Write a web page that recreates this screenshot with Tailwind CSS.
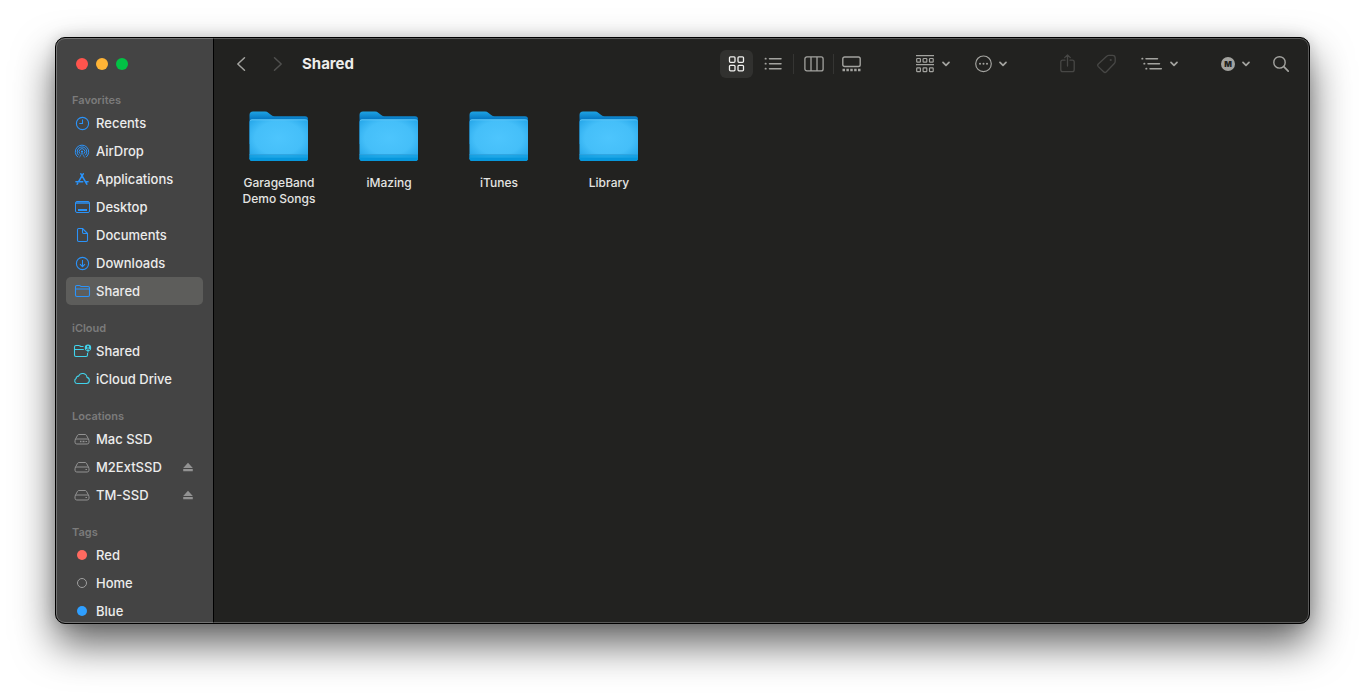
<!DOCTYPE html>
<html lang="en">
<head>
  <meta charset="UTF-8" />
  <meta name="viewport" content="width=device-width, initial-scale=1.0" />
  <title>Shared</title>
  <script src="https://cdn.jsdelivr.net/npm/@tailwindcss/browser@4"></script>
</head>
<body class="bg-white h-screen px-[55px] pt-[37px] pb-[73px] font-['Inter','Liberation_Sans',sans-serif] antialiased overflow-hidden">

  <!-- Shared icons -->
  <svg class="absolute w-0 h-0" aria-hidden="true">
    <defs>
      <linearGradient id="folder-back" x1="0" y1="0" x2="0" y2="1">
        <stop offset="0" stop-color="#1fa3e3" />
        <stop offset=".25" stop-color="#0476c2" />
        <stop offset="1" stop-color="#0476c2" />
      </linearGradient>
      <radialGradient id="folder-front" cx=".5" cy=".45" r=".68">
        <stop offset="0" stop-color="#4dc5fd" />
        <stop offset=".6" stop-color="#45bff9" />
        <stop offset="1" stop-color="#22a4e8" />
      </radialGradient>
    </defs>
    <symbol id="chevron" viewBox="0 0 8 6">
      <path d="M1 1.3 4 4.3 7 1.3" fill="none" stroke="currentColor" stroke-width="1.7" stroke-linecap="round" stroke-linejoin="round" />
    </symbol>
    <symbol id="drive" viewBox="0 0 18 18">
      <path d="M2.2 9.7 4.6 5.2Q5 4.5 5.8 4.5h6.4q.8 0 1.2.7l2.4 4.5" fill="none" stroke="currentColor" />
      <rect x="2" y="9" width="14" height="5" rx="1.8" fill="none" stroke="currentColor" />
      <path d="M12.5 11.5h1.5" stroke="currentColor" />
    </symbol>
    <symbol id="eject" viewBox="0 0 10 10">
      <path d="M5 .8 9.8 6H.2zM.2 7h9.6v2.2H.2z" fill="currentColor" />
    </symbol>
    <symbol id="folder" viewBox="0 0 64 64">
      <path d="M2.5 11q0-3.5 3.5-3.5h12q2 0 3.6 1.4l2.6 2.2q1.5 1.2 3.4 1.2H58q3 0 3 3V40H2.5z" fill="url(#folder-back)" />
      <path d="M2.5 18q0-2.5 2.5-2.5h53.5q2.5 0 2.5 2.5v36q0 3-3 3H5.5q-3 0-3-3z" fill="url(#folder-front)" />
      <path d="M3 16.8q.6-1 2-1h53.5q1.4 0 2 1" fill="none" stroke="#6fd0fb" stroke-width=".8" />
      <path d="M2.5 51H61v3q0 3-3 3H5.5q-3 0-3-3z" fill="#0c9bdd" fill-opacity=".65" />
      <path d="M2.5 50.5H61" stroke="#2b9fdc" stroke-width=".8" />
      <path d="M2.5 53.8H61v.4q0 2.800-3 2.800H5.5q-3 0-3-2.800z" fill="#0797dc" />
    </symbol>
  </svg>

  <!-- Window -->
  <div class="relative flex h-full rounded-[10px] border border-black bg-[#222220] shadow-[0_20px_40px_rgba(0,0,0,0.62),0_0_14px_rgba(0,0,0,0.15)] overflow-hidden">

    <!-- Sidebar -->
    <aside class="w-[158px] shrink-0 bg-[#444444] border-r border-black overflow-hidden">
      <div class="flex items-center gap-2 h-[52px] mb-px pl-5">
        <button aria-label="Close" class="w-3 h-3 rounded-full bg-[#ff544d]"></button>
        <button aria-label="Minimize" class="w-3 h-3 rounded-full bg-[#ffb436]"></button>
        <button aria-label="Zoom" class="w-3 h-3 rounded-full bg-[#02c245]"></button>
      </div>

      <nav class="flex flex-col gap-3.5 px-[10px] text-[13px] font-medium text-[#ececec] whitespace-nowrap">
        <section>
          <h2 class="h-[18px] leading-[18px] pl-1.5 text-[11px] font-semibold text-[#7b7b7b]">Favorites</h2>
          <ul class="text-[#2b93f9]">
            <li><a href="#" class="flex items-center gap-[5px] h-7 pl-[7px] rounded-[5px]">
              <svg class="w-[18px] h-[18px]" viewBox="0 0 18 18" fill="none" stroke="currentColor" stroke-width="1.1"><circle cx="9.5" cy="9.5" r="6.1" /><path d="M9.5 5.5v4H6.3" /></svg>
              <span class="pt-0.5 text-[#ececec]">Recents</span></a></li>
            <li><a href="#" class="flex items-center gap-[5px] h-7 pl-[7px] rounded-[5px]">
              <svg class="w-[18px] h-[18px]" viewBox="0 0 18 18" fill="none" stroke="currentColor" stroke-width="1"><path d="M5 15.2a6.7 6.7 0 1 1 8 0M5.8 13.3a4.8 4.8 0 1 1 6.4 0M7 11.7a2.9 2.9 0 1 1 4 0" /><circle cx="9" cy="9.7" r="1.1" fill="currentColor" stroke="none" /><path d="m9 11-2.6 4.5M9 11l2.6 4.5" stroke-width=".7" /></svg>
              <span class="pt-0.5 text-[#ececec]">AirDrop</span></a></li>
            <li><a href="#" class="flex items-center gap-[5px] h-7 pl-[7px] rounded-[5px]">
              <svg class="w-[18px] h-[18px]" viewBox="0 0 18 18" fill="none" stroke="currentColor" stroke-width="1.6" stroke-linecap="round"><path d="M10.2 3.8 5.6 11.7M7.9 3.8l5.9 10.4M3 11.7h6.7M12.7 11.7H15M4.7 13.4l-.5.8" /></svg>
              <span class="pt-0.5 text-[#ececec]">Applications</span></a></li>
            <li><a href="#" class="flex items-center gap-[5px] h-7 pl-[7px] rounded-[5px]">
              <svg class="w-[18px] h-[18px]" viewBox="0 0 18 18" fill="none" stroke="currentColor"><rect x="2.5" y="3.5" width="14" height="11" rx="1.5" /><path d="M3 5h13" stroke-width="2" stroke-opacity=".7" /><path d="M5 12h9" stroke-width="2" /></svg>
              <span class="pt-0.5 text-[#ececec]">Desktop</span></a></li>
            <li><a href="#" class="flex items-center gap-[5px] h-7 pl-[7px] rounded-[5px]">
              <svg class="w-[18px] h-[18px]" viewBox="0 0 18 18" fill="none" stroke="currentColor" stroke-width="1.1" stroke-linejoin="round"><path d="M9.5 2.5H5.7q-1.2 0-1.2 1.2v10.6q0 1.2 1.2 1.2h7.6q1.2 0 1.2-1.2V7.5zv3.8q0 1.2 1.2 1.2h3.8" /></svg>
              <span class="pt-0.5 text-[#ececec]">Documents</span></a></li>
            <li><a href="#" class="flex items-center gap-[5px] h-7 pl-[7px] rounded-[5px]">
              <svg class="w-[18px] h-[18px]" viewBox="0 0 18 18" fill="none" stroke="currentColor" stroke-width="1.1"><circle cx="9.5" cy="9.5" r="6.1" /><path d="M9.5 6v6.5M7 10.2l2.5 2.5 2.5-2.5" /></svg>
              <span class="pt-0.5 text-[#ececec]">Downloads</span></a></li>
            <li><a href="#" aria-current="page" class="flex items-center gap-[5px] h-7 pl-[7px] rounded-[5px] bg-[#5d5d5b]">
              <svg class="w-[18px] h-[18px]" viewBox="0 0 18 18" fill="none" stroke="currentColor" stroke-width="1.1"><path d="M2.5 13V4.7q0-1.2 1.2-1.2h2.6q.6 0 1 .4l.7.6h7q1.5 0 1.5 1.5v7q0 1.5-1.5 1.5H4q-1.5 0-1.5-1.5M2.5 7h14" /></svg>
              <span class="pt-0.5 text-[#ececec]">Shared</span></a></li>
          </ul>
        </section>

        <section>
          <h2 class="h-[18px] leading-[18px] pl-1.5 text-[11px] font-semibold text-[#7b7b7b]">iCloud</h2>
          <ul class="text-[#41d3ec]">
            <li><a href="#" class="flex items-center gap-[5px] h-7 pl-[7px] rounded-[5px]">
              <svg class="w-[18px] h-[18px] overflow-visible" viewBox="0 0 18 18" fill="none" stroke="currentColor" stroke-width="1.1"><path d="M10.5 4.5H7.6l-.9-.7q-.3-.3-.8-.3H3q-1.5 0-1.5 1.5v8q0 1.5 1.5 1.5h10q1.5 0 1.5-1.5v-2M1.5 7.5h9.3" /><circle cx="15" cy="5.8" r="3.2" fill="currentColor" stroke="none" /><circle cx="15" cy="4.7" r="1" fill="#444444" stroke="none" /><path d="M13.2 7.6q1.8-1.600 3.600 0" stroke="#444444" stroke-width="1" /><path d="M15 8.5v2" /></svg>
              <span class="pt-0.5 text-[#ececec]">Shared</span></a></li>
            <li><a href="#" class="flex items-center gap-[5px] h-7 pl-[7px] rounded-[5px]">
              <svg class="w-[18px] h-[18px]" viewBox="0 0 18 18" fill="none" stroke="currentColor" stroke-width="1.1"><path d="M4.3 13.5h9.2a3.1 3.1 0 0 0 .5-6.1 4.4 4.4 0 0 0-8.4-1.300 2.300 2.300 0 0 0-2.500 2.500A2.600 2.600 0 0 0 4.300 13.500z" /></svg>
              <span class="pt-0.5 text-[#ececec]">iCloud Drive</span></a></li>
          </ul>
        </section>

        <section>
          <h2 class="h-[18px] leading-[18px] pl-1.5 text-[11px] font-semibold text-[#7b7b7b]">Locations</h2>
          <ul class="text-[#929292]">
            <li><a href="#" class="flex items-center gap-[5px] h-7 pl-[7px] rounded-[5px]">
              <svg class="w-[18px] h-[18px]" viewBox="0 0 18 18"><use href="#drive" /><path d="M7 11.5h5" stroke="currentColor" stroke-width="1.5" stroke-dasharray="1 .5" /></svg>
              <span class="pt-0.5 text-[#ececec]">Mac SSD</span></a></li>
            <li class="flex items-center h-7 pr-[10px]">
              <a href="#" class="flex flex-1 items-center gap-[5px] pl-[7px]">
                <svg class="w-[18px] h-[18px]"><use href="#drive" /></svg>
                <span class="pt-0.5 text-[#ececec]">M2ExtSSD</span></a>
              <button aria-label="Eject M2ExtSSD"><svg class="w-[10px] h-[10px]"><use href="#eject" /></svg></button></li>
            <li class="flex items-center h-7 pr-[10px]">
              <a href="#" class="flex flex-1 items-center gap-[5px] pl-[7px]">
                <svg class="w-[18px] h-[18px]"><use href="#drive" /></svg>
                <span class="pt-0.5 text-[#ececec]">TM-SSD</span></a>
              <button aria-label="Eject TM-SSD"><svg class="w-[10px] h-[10px]"><use href="#eject" /></svg></button></li>
          </ul>
        </section>

        <section>
          <h2 class="h-[18px] leading-[18px] pl-1.5 text-[11px] font-semibold text-[#7b7b7b]">Tags</h2>
          <ul>
            <li><a href="#" class="flex items-center gap-[9px] h-7 pl-[11px] rounded-[5px]">
              <span class="w-[10px] h-[10px] rounded-full bg-[#ff6a60]"></span>
              <span class="pt-0.5">Red</span></a></li>
            <li><a href="#" class="flex items-center gap-[9px] h-7 pl-[11px] rounded-[5px]">
              <span class="w-[10px] h-[10px] rounded-full border border-[#a0a0a0]"></span>
              <span class="pt-0.5">Home</span></a></li>
            <li><a href="#" class="flex items-center gap-[9px] h-7 pl-[11px] rounded-[5px]">
              <span class="w-[10px] h-[10px] rounded-full bg-[#2f9fff]"></span>
              <span class="pt-0.5">Blue</span></a></li>
          </ul>
        </section>
      </nav>
    </aside>

    <!-- Main area -->
    <main class="flex-1 min-w-0">
      <header class="flex items-center h-[52px] pl-[22px] pr-5 text-[#a3a39f]">
        <button aria-label="Back"><svg class="w-[10px] h-4" viewBox="0 0 10 16" fill="none" stroke="currentColor" stroke-width="1.5" stroke-linecap="round" stroke-linejoin="round"><path d="M8.5 1.8 1.8 8l6.7 6.2" /></svg></button>
        <button aria-label="Forward" disabled class="ml-[27px] text-[#50504e]"><svg class="w-[10px] h-4" viewBox="0 0 10 16" fill="none" stroke="currentColor" stroke-width="1.5" stroke-linecap="round" stroke-linejoin="round"><path d="M1.5 1.8 8.2 8l-6.7 6.2" /></svg></button>
        <h1 class="ml-[19px] text-[15px] font-bold text-[#ededeb]">Shared</h1>

        <!-- View switcher -->
        <div class="flex items-center ml-auto">
          <button aria-label="Icon view" aria-pressed="true" class="flex items-center justify-center w-[33px] h-7 rounded-md bg-[#31312f] text-[#f0f0ee]">
            <svg class="w-[17px] h-4" viewBox="0 0 17 16" fill="none" stroke="currentColor" stroke-width="1.3"><rect x="1.5" y=".8" width="5.5" height="5.5" rx="1" /><rect x="10" y=".8" width="5.5" height="5.5" rx="1" /><rect x="1.5" y="9.3" width="5.5" height="5.5" rx="1" /><rect x="10" y="9.3" width="5.5" height="5.5" rx="1" /></svg>
          </button>
          <button aria-label="List view" class="flex items-center justify-center w-10 h-7">
            <svg class="w-[18px] h-4" viewBox="0 0 18 16" fill="none" stroke="currentColor" stroke-width="1.5" stroke-linecap="round"><path d="M5.5 2.7h11.5M5.5 7.7h11.5M5.5 12.7h11.5" /><path d="M1.5 2.7h.3M1.5 7.7h.3M1.5 12.7h.3" stroke-width="1.8" /></svg>
          </button>
          <span class="w-px h-5 bg-[#353533]"></span>
          <button aria-label="Column view" class="flex items-center justify-center w-[39px] h-7">
            <svg class="w-5 h-4" viewBox="0 0 20 16" fill="none" stroke="currentColor" stroke-width="1.3"><rect x=".9" y=".9" width="18.2" height="14" rx="2" /><path d="M7 1v14M13 1v14" /></svg>
          </button>
          <span class="w-px h-5 bg-[#353533]"></span>
          <button aria-label="Gallery view" class="flex items-center justify-center w-[35px] h-7">
            <svg class="w-[19px] h-4" viewBox="0 0 19 16" fill="none" stroke="currentColor" stroke-width="1.4"><rect x=".8" y="1" width="17.4" height="9.5" rx="1.8" /><path d="M.5 14h18" stroke-width="2.4" stroke-dasharray="2.5 1.38" /></svg>
          </button>
        </div>

        <button aria-label="Group" class="flex items-center gap-2 ml-[47px]">
          <svg class="w-[18px] h-[18px]" viewBox="0 0 18 18" fill="none" stroke="currentColor" stroke-width="1.2"><path d="M0 .7h18M0 9.7h18" /><rect x=".7" y="3.5" width="3.7" height="3.7" rx=".6" /><rect x="7.1" y="3.5" width="3.7" height="3.7" rx=".6" /><rect x="13.5" y="3.5" width="3.7" height="3.7" rx=".6" /><rect x=".7" y="12.9" width="3.7" height="3.7" rx=".6" /><rect x="7.1" y="12.9" width="3.7" height="3.7" rx=".6" /><rect x="13.5" y="12.9" width="3.7" height="3.7" rx=".6" /></svg>
          <svg class="w-2 h-1.5"><use href="#chevron" /></svg>
        </button>
        <button aria-label="Actions" class="flex items-center gap-[7px] ml-[25px]">
          <svg class="w-[17px] h-[18px]" viewBox="0 0 17 18" fill="none" stroke="currentColor" stroke-width="1.2"><circle cx="8.5" cy="8.8" r="7.8" /><path d="M5 8.8h.01M8.5 8.8h.01M12 8.8h.01" stroke-width="2" stroke-linecap="round" /></svg>
          <svg class="w-2 h-1.5"><use href="#chevron" /></svg>
        </button>
        <button aria-label="Share" disabled class="ml-[53px] text-[#474745]">
          <svg class="w-[15px] h-5" viewBox="0 0 15 20" fill="none" stroke="currentColor" stroke-width="1.3" stroke-linecap="round" stroke-linejoin="round"><path d="M5 6.2H2.7Q.8 6.2.8 8.1v7.6q0 1.900 1.900 1.900h9.600q1.900 0 1.900-1.900V8.100q0-1.900-1.900-1.900H10M7.500 12V.9M4.700 3.600 7.500.9l2.800 2.700" /></svg>
        </button>
        <button aria-label="Edit tags" disabled class="ml-[22px] text-[#474745]">
          <svg class="w-[19px] h-5" viewBox="0 0 19 20" fill="none" stroke="currentColor" stroke-width="1.3" stroke-linejoin="round"><path d="M9.7 2.2q.9-.9 2.200-.9h3.600q2.700 0 2.700 2.700v3.300q0 1.300-.9 2.200l-7.900 8.300q-1.400 1.400-2.800 0l-5.300-5.200q-1.200-1.300 0-2.600z" /><circle cx="13.7" cy="6" r="1.1" fill="currentColor" stroke="none" /></svg>
        </button>
        <button aria-label="Sort" class="flex items-center gap-2 ml-[25px]">
          <svg class="w-[21px] h-4" viewBox="0 0 21 16" fill="none" stroke="currentColor" stroke-width="1.5" stroke-linecap="round"><path d="M5 2.7h11.5M7 7.7h11.5M9 12.7h11.3" /><path d="M1.2 2.7h.3M3.2 7.7h.3M5.2 12.7h.3" stroke-width="1.8" /></svg>
          <svg class="w-2 h-1.5"><use href="#chevron" /></svg>
        </button>
        <button aria-label="Extensions" class="flex items-center gap-[7px] ml-[43px]">
          <span class="flex items-center justify-center w-[14px] h-[14px] rounded-full bg-[#a3a39f] text-[8px] leading-none font-black text-[#222220]">M</span>
          <svg class="w-2 h-1.5"><use href="#chevron" /></svg>
        </button>
        <button aria-label="Search" class="ml-[23px]">
          <svg class="w-4 h-4" viewBox="0 0 16 16" fill="none" stroke="currentColor" stroke-width="1.4" stroke-linecap="round"><circle cx="6.5" cy="6.4" r="5.7" /><path d="m10.8 10.7 4.4 4.4" stroke-width="1.7" /></svg>
        </button>
      </header>

      <!-- Files -->
      <ul class="flex flex-wrap pl-[10px] pt-[14px] text-center text-[12px] leading-4 font-medium text-[#e4e4e2]">
        <li class="w-[110px] flex flex-col items-center gap-[7px]">
          <svg class="w-16 h-16"><use href="#folder" /></svg>
          <span class="w-20">GarageBand Demo Songs</span>
        </li>
        <li class="w-[110px] flex flex-col items-center gap-[7px]">
          <svg class="w-16 h-16"><use href="#folder" /></svg>
          <span>iMazing</span>
        </li>
        <li class="w-[110px] flex flex-col items-center gap-[7px]">
          <svg class="w-16 h-16"><use href="#folder" /></svg>
          <span>iTunes</span>
        </li>
        <li class="w-[110px] flex flex-col items-center gap-[7px]">
          <svg class="w-16 h-16"><use href="#folder" /></svg>
          <span>Library</span>
        </li>
      </ul>
    </main>

    <!-- Light inner edge -->
    <div class="absolute inset-0 rounded-[9px] border border-white/25 pointer-events-none"></div>
  </div>

</body>
</html>
